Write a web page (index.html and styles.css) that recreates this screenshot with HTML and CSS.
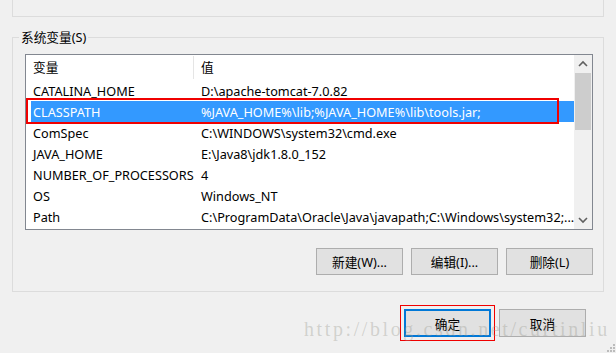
FILE: index.html
```html
<!DOCTYPE html>
<html lang="zh-CN">
<head>
  <meta charset="UTF-8" />
  <title>环境变量</title>
  <link rel="stylesheet" href="styles.css">
</head>
<body>

  <div class="user-group"></div>

  <fieldset class="sys-group">
    <legend>系统变量(S)</legend>

    <div class="var-list">
      <div class="list-main">
        <div class="list-head">
          <div class="head-cell head-name">变量</div>
          <div class="head-cell">值</div>
        </div>
        <div class="row"><span class="cell">CATALINA_HOME</span><span class="cell">D:\apache-tomcat-7.0.82</span></div>
        <div class="row selected"><span class="cell">CLASSPATH</span><span class="cell">%JAVA_HOME%\lib;%JAVA_HOME%\lib\tools.jar;</span><div class="mark"></div></div>
        <div class="row"><span class="cell">ComSpec</span><span class="cell">C:\WINDOWS\system32\cmd.exe</span></div>
        <div class="row"><span class="cell">JAVA_HOME</span><span class="cell">E:\Java8\jdk1.8.0_152</span></div>
        <div class="row"><span class="cell">NUMBER_OF_PROCESSORS</span><span class="cell">4</span></div>
        <div class="row"><span class="cell">OS</span><span class="cell">Windows_NT</span></div>
        <div class="row"><span class="cell">Path</span><span class="cell">C:\ProgramData\Oracle\Java\javapath;C:\Windows\system32;...</span></div>
      </div>
      <div class="scrollbar">
        <svg class="arrow" width="18" height="18" viewBox="0 0 18 18"><path d="M5 11 L9 7 L13 11" fill="none" stroke="#606060" stroke-width="1.6"/></svg>
        <div class="thumb"></div>
        <div class="track"></div>
        <svg class="arrow" width="18" height="18" viewBox="0 0 18 18"><path d="M5 7 L9 11 L13 7" fill="none" stroke="#606060" stroke-width="1.6"/></svg>
      </div>
    </div>

    <div class="list-buttons">
      <button>新建(W)...</button>
      <button>编辑(I)...</button>
      <button>删除(L)</button>
    </div>
  </fieldset>

  <div class="dialog-buttons">
    <button class="default">确定</button>
    <button>取消</button>
  </div>

  <div class="watermark">http://blog.csdn.net/curtinliu</div>

  <svg class="grip" width="10" height="10" viewBox="0 0 10 10">
    <rect x="8" y="2" width="2" height="2" fill="#bcbcbc"/>
    <rect x="5" y="5" width="2" height="2" fill="#bcbcbc"/>
    <rect x="8" y="5" width="2" height="2" fill="#bcbcbc"/>
    <rect x="2" y="8" width="2" height="2" fill="#bcbcbc"/>
    <rect x="5" y="8" width="2" height="2" fill="#bcbcbc"/>
    <rect x="8" y="8" width="2" height="2" fill="#bcbcbc"/>
  </svg>

</body>
</html>
```

FILE: styles.css
```css
body {
  font-family: 'Noto Sans', 'Noto Sans CJK SC', sans-serif;
  font-size: 12.7px;
  color: #000;
  background-color: #f0f0f0;
  margin: 0;
  width: 616px;
  height: 353px;
  overflow: hidden;
  position: relative;
}
.user-group {
  margin: 0 12px;
  height: 17px;
  box-sizing: border-box;
  border: 1px solid #dcdcdc;
  border-top: none;
}
.sys-group {
  margin: 12px 12px 0;
  padding: 9px 10px 16px 12px;
  border: 1px solid #dcdcdc;
}
.sys-group legend {
  padding: 0 2px;
  margin-left: -6px;
  line-height: 16px;
  color: #000;
}
.var-list {
  display: flex;
  height: 176px;
  box-sizing: border-box;
  border: 1px solid #828790;
  background-color: white;
}
.list-main {
  flex: 1;
}
.list-head {
  display: grid;
  grid-template-columns: 168px 1fr;
  height: 25px;
  align-items: center;
}
.head-cell {
  padding-left: 7px;
  line-height: 23px;
}
.head-name {
  border-right: 1px solid #e5e5e5;
}
.row {
  position: relative;
  display: grid;
  grid-template-columns: 168px 1fr;
  height: 21px;
  line-height: 22px;
  margin-left: 5px;
  white-space: nowrap;
}
.cell {
  padding-left: 2px;
  overflow: hidden;
}
.row.selected {
  background-color: #3399ff;
  color: white;
}
.mark {
  position: absolute;
  left: -5px;
  top: -3px;
  width: 529px;
  height: 22px;
  border: 2px solid #f00000;
}
.scrollbar {
  width: 18px;
  display: flex;
  flex-direction: column;
  background-color: #f0f0f0;
}
.arrow {
  display: block;
  flex: none;
}
.thumb {
  height: 57px;
  margin: 0 1px;
  background-color: #cdcdcd;
}
.track {
  flex: 1;
}
.list-buttons {
  display: flex;
  justify-content: flex-end;
  gap: 8px;
  margin-top: 18px;
}
button {
  font-family: 'Noto Sans', 'Noto Sans CJK SC', sans-serif;
  font-size: 12.7px;
  width: 87px;
  height: 27px;
  padding: 0;
  background-color: #e1e1e1;
  border: 1px solid #adadad;
  color: #000;
}
.dialog-buttons {
  display: flex;
  justify-content: flex-end;
  gap: 8px;
  margin-top: 17px;
  padding-right: 30px;
}
.dialog-buttons button {
  height: 28px;
}
.dialog-buttons .default {
  border: 2px solid #0078d7;
  outline: 1px solid #f00000;
  outline-offset: 3px;
}
.watermark {
  position: absolute;
  left: 304px;
  top: 318px;
  font-family: 'Liberation Serif', serif;
  font-size: 20px;
  letter-spacing: 2.6px;
  color: rgba(150, 150, 140, 0.35);
  white-space: nowrap;
}
.grip {
  position: absolute;
  right: 1px;
  bottom: 1px;
}
```
